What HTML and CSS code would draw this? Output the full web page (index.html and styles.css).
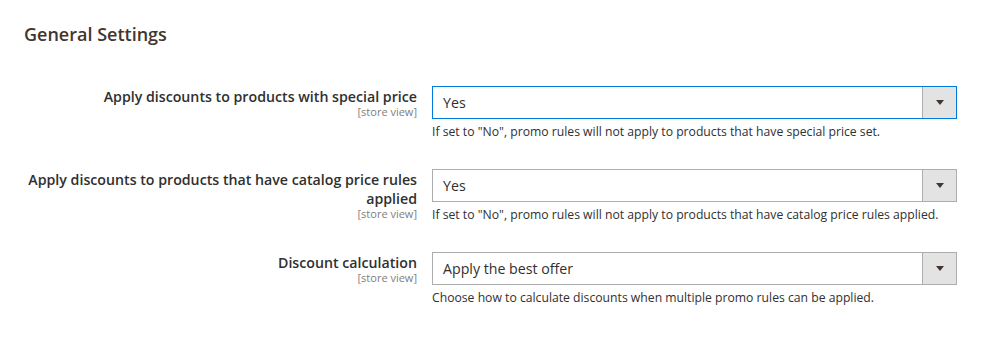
FILE: index.html
```html
<!DOCTYPE html>
<html lang="en">
<head>
    <meta charset="UTF-8">
    <meta name="viewport" content="width=device-width, initial-scale=1.0">
    <title>General Settings</title>
    <link rel="stylesheet" href="styles.css">
</head>
<body>
<div class="section">
    <h2 class="section-title">General Settings</h2>

    <div class="config">
        <div class="row">
            <div class="label">
                <span>Apply discounts to products with special price</span>
                <span class="scope">[store view]</span>
            </div>
            <div class="value">
                <div class="select focused">
                    <span class="select-text">Yes</span>
                    <span class="select-arrow"></span>
                </div>
                <p class="note">If set to "No", promo rules will not apply to products that have special price set.</p>
            </div>
        </div>

        <div class="row">
            <div class="label">
                <span>Apply discounts to products that have catalog price rules applied</span>
                <span class="scope">[store view]</span>
            </div>
            <div class="value">
                <div class="select">
                    <span class="select-text">Yes</span>
                    <span class="select-arrow"></span>
                </div>
                <p class="note">If set to "No", promo rules will not apply to products that have catalog price rules applied.</p>
            </div>
        </div>

        <div class="row">
            <div class="label">
                <span>Discount calculation</span>
                <span class="scope">[store view]</span>
            </div>
            <div class="value">
                <div class="select">
                    <span class="select-text">Apply the best offer</span>
                    <span class="select-arrow"></span>
                </div>
                <p class="note">Choose how to calculate discounts when multiple promo rules can be applied.</p>
            </div>
        </div>
    </div>
</div>
</body>
</html>
```

FILE: styles.css
```css
*{
    margin: 0px;
    padding: 0px;
    box-sizing: border-box;
}

body{
    font-family: 'Open Sans', 'Liberation Sans', sans-serif;
    background-color: #fff;
    color: #303030;
}

.section {
    padding: 22px 0 0 24px;
}

.section-title {
    font-size: 18px;
    font-weight: 600;
    line-height: 24px;
    color: #41362f;
}

.config {
    margin-top: 40px;
}

.row {
    display: grid;
    grid-template-columns: 393px 525px;
    column-gap: 15px;
    margin-bottom: 29px;
}

.label {
    text-align: right;
    font-size: 14.2px;
    font-weight: 600;
    line-height: 19px;
    padding-top: 1px;
    color: #303030;
}

.scope {
    display: block;
    font-size: 11px;
    font-weight: 400;
    line-height: 12px;
    color: #808080;
}

.select {
    display: flex;
    height: 33px;
    border: 1px solid #adadad;
    background-color: #fff;
}

/* focused select gets the blue border */
.select.focused {
    border-color: #007bdb;
}

.select-text {
    flex: 1;
    padding-left: 10px;
    font-size: 14.2px;
    line-height: 31px;
    color: #303030;
}

.select-arrow {
    width: 34px;
    background-color: #e3e3e3;
    border-left: 1px solid #adadad;
    position: relative;
}

.select-arrow::after {
    content: '';
    position: absolute;
    left: 13px;
    top: 13px;
    border-left: 4px solid transparent;
    border-right: 4px solid transparent;
    border-top: 5px solid #41362f;
}

.note {
    margin-top: 5px;
    font-size: 12.2px;
    line-height: 16px;
    color: #303030;
}
```
